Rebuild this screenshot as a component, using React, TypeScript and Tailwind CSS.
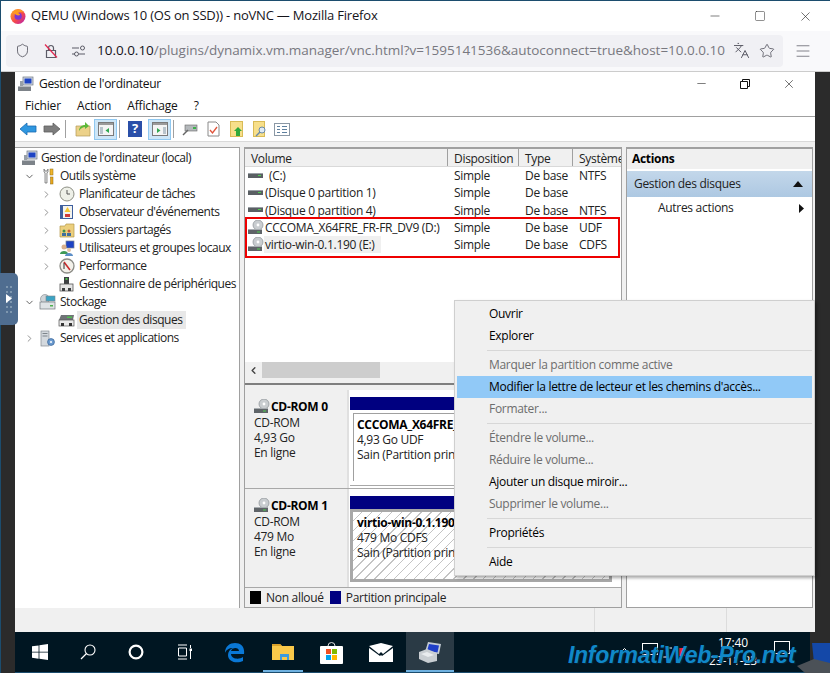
import React from 'react';
import { Shield, Languages, Star, Menu, X, Minus, Square, ChevronRight, ChevronDown, ChevronLeft } from 'lucide-react';

const HDD = () => (
  <svg width="16" height="10" viewBox="0 0 16 10" className="shrink-0">
    <rect x="0" y="2" width="15" height="5" fill="#5a5f63" />
    <rect x="0" y="2" width="15" height="1" fill="#9aa0a5" />
    <rect x="10" y="4" width="3" height="1" fill="#4fd04f" />
  </svg>
);

const CD = () => (
  <svg width="16" height="15" viewBox="0 0 16 15" className="shrink-0">
    <circle cx="10" cy="5" r="5" fill="#c9cdd0" stroke="#8a8f93" strokeWidth="0.7" />
    <circle cx="10" cy="5" r="1.4" fill="#fff" />
    <rect x="0" y="9" width="14" height="5" fill="#5f6468" />
    <rect x="0" y="9" width="14" height="1" fill="#a8adb1" />
    <rect x="9" y="11.5" width="3" height="1" fill="#4fd04f" />
  </svg>
);

const TreeIcon = ({ kind }: { kind: string }) => {
  if (kind === 'root')
    return (
      <svg width="17" height="16" viewBox="0 0 17 16">
        <rect x="6" y="1" width="10" height="8" fill="#d5dbe2" stroke="#6b7480" strokeWidth="0.7" />
        <rect x="7.5" y="2.5" width="7" height="5" fill="#1d43c4" />
        <rect x="1" y="10" width="13" height="5" fill="#7d8389" />
        <rect x="1" y="10" width="13" height="1" fill="#b8bcc0" />
        <rect x="3" y="5" width="3" height="5" fill="#98a0a8" />
      </svg>
    );
  if (kind === 'tools')
    return (
      <svg width="14" height="17" viewBox="0 0 14 17">
        <path d="M3 1v3l1 1v10h2V5l1-1V1L6 3H4z" fill="#e8e8e8" stroke="#666" strokeWidth="0.7" />
        <rect x="9" y="1" width="3" height="6" fill="#f1b52a" stroke="#8d6a12" strokeWidth="0.5" />
        <rect x="9.5" y="9" width="2.5" height="7" fill="#e9a71c" stroke="#8d6a12" strokeWidth="0.5" />
      </svg>
    );
  if (kind === 'clock')
    return (
      <svg width="16" height="16" viewBox="0 0 16 16">
        <circle cx="8" cy="8" r="7" fill="#eef0e8" stroke="#8d8f84" />
        <path d="M8 4v4h3" stroke="#555" fill="none" />
      </svg>
    );
  if (kind === 'event')
    return (
      <svg width="15" height="16" viewBox="0 0 15 16">
        <rect x="1" y="1" width="13" height="14" fill="#3e5f9e" />
        <rect x="4" y="2" width="9" height="12" fill="#f3f3ee" />
        <path d="M8.5 3l3 5h-6z" fill="#f4c531" />
        <rect x="6" y="10" width="5" height="3" fill="#cf3a3a" />
      </svg>
    );
  if (kind === 'share')
    return (
      <svg width="16" height="15" viewBox="0 0 16 15">
        <path d="M1 3h5l1-2h8v13H1z" fill="#eccf7d" stroke="#b59a4c" strokeWidth="0.7" />
        <circle cx="5" cy="8" r="1.5" fill="#3f8f4d" />
        <rect x="3" y="10" width="4" height="3" fill="#3f6f9f" />
        <circle cx="10" cy="8" r="1.5" fill="#c25d3b" />
        <rect x="8" y="10" width="4" height="3" fill="#3f6f9f" />
      </svg>
    );
  if (kind === 'users')
    return (
      <svg width="16" height="16" viewBox="0 0 16 16">
        <rect x="7" y="1" width="8" height="7" fill="#1d43c4" stroke="#7b8490" strokeWidth="0.7" />
        <circle cx="5" cy="7" r="2.5" fill="#d9b18c" />
        <path d="M1 14c0-4 8-4 8 0z" fill="#3f9a55" />
        <circle cx="10" cy="10" r="2" fill="#e2c3a4" />
        <path d="M6 16c0-4 8-4 8 0z" fill="#5c8fc7" />
      </svg>
    );
  if (kind === 'perf')
    return (
      <svg width="16" height="16" viewBox="0 0 16 16">
        <circle cx="8" cy="8" r="7" fill="#f3f1ea" stroke="#8b8b85" strokeWidth="1.3" />
        <path d="M5 4l6 8" stroke="#c92a2a" strokeWidth="1.6" />
        <path d="M5 11V5" stroke="#333" />
      </svg>
    );
  if (kind === 'device')
    return (
      <svg width="15" height="16" viewBox="0 0 15 16">
        <rect x="5" y="1" width="5" height="7" fill="#3c3f42" />
        <rect x="6.5" y="2" width="2" height="2" fill="#52c04f" />
        <rect x="1" y="8" width="13" height="7" fill="#e5e5e5" stroke="#555" strokeWidth="0.8" />
        <rect x="3" y="12" width="3" height="3" fill="#3c3f42" />
        <rect x="9" y="12" width="3" height="3" fill="#3c3f42" />
      </svg>
    );
  if (kind === 'storage')
    return (
      <svg width="17" height="16" viewBox="0 0 17 16">
        <circle cx="6" cy="5" r="4.5" fill="#cfd4d8" stroke="#7e858a" strokeWidth="0.6" />
        <rect x="7" y="2" width="9" height="5" fill="#3ba3c4" stroke="#7e858a" strokeWidth="0.6" />
        <rect x="1" y="8" width="15" height="7" fill="#dfe3e6" stroke="#6f767b" strokeWidth="0.7" />
        <rect x="11" y="11" width="3" height="1.5" fill="#4fb04f" />
      </svg>
    );
  if (kind === 'disk')
    return (
      <svg width="17" height="13" viewBox="0 0 17 13">
        <path d="M3 1h13l-1 5H1z" fill="#6f7376" />
        <rect x="1" y="6" width="15" height="6" fill="#e9e9e9" stroke="#555" strokeWidth="0.7" />
        <rect x="9" y="2.5" width="5" height="1.5" fill="#4fc04f" />
        <rect x="3" y="9" width="3" height="3" fill="#333" />
        <rect x="11" y="9" width="3" height="3" fill="#333" />
      </svg>
    );
  return (
    <svg width="15" height="17" viewBox="0 0 15 17">
      <rect x="1" y="1" width="8" height="15" fill="#d4d9de" stroke="#848b92" strokeWidth="0.7" />
      <rect x="2.5" y="3" width="5" height="1" fill="#7d848a" />
      <rect x="2.5" y="5.5" width="5" height="1" fill="#7d848a" />
      <circle cx="11" cy="12" r="3.4" fill="#6c9bd0" stroke="#3f6b9d" strokeWidth="0.8" />
      <circle cx="11" cy="12" r="1" fill="#fff" />
    </svg>
  );
};

const tree = [
  { label: "Gestion de l'ordinateur (local)", level: 0, icon: 'root', arrow: '' },
  { label: 'Outils système', level: 1, icon: 'tools', arrow: 'down' },
  { label: 'Planificateur de tâches', level: 2, icon: 'clock', arrow: 'right' },
  { label: "Observateur d'événements", level: 2, icon: 'event', arrow: 'right' },
  { label: 'Dossiers partagés', level: 2, icon: 'share', arrow: 'right' },
  { label: 'Utilisateurs et groupes locaux', level: 2, icon: 'users', arrow: 'right' },
  { label: 'Performance', level: 2, icon: 'perf', arrow: 'right' },
  { label: 'Gestionnaire de périphériques', level: 2, icon: 'device', arrow: '' },
  { label: 'Stockage', level: 1, icon: 'storage', arrow: 'down' },
  { label: 'Gestion des disques', level: 2, icon: 'disk', arrow: '', selected: true },
  { label: 'Services et applications', level: 1, icon: 'services', arrow: 'right' },
];

const volumes = [
  { name: '(C:)', sys: 'NTFS', cd: false, indent: true },
  { name: '(Disque 0 partition 1)', sys: '', cd: false },
  { name: '(Disque 0 partition 4)', sys: 'NTFS', cd: false },
  { name: 'CCCOMA_X64FRE_FR-FR_DV9 (D:)', sys: 'UDF', cd: true },
  { name: 'virtio-win-0.1.190 (E:)', sys: 'CDFS', cd: true, selected: true },
];

const menu: { label?: string; off?: boolean; active?: boolean; sep?: boolean }[] = [
  { label: 'Ouvrir' },
  { label: 'Explorer' },
  { sep: true },
  { label: 'Marquer la partition comme active', off: true },
  { label: "Modifier la lettre de lecteur et les chemins d'accès...", active: true },
  { label: 'Formater...', off: true },
  { sep: true },
  { label: 'Étendre le volume...', off: true },
  { label: 'Réduire le volume...', off: true },
  { label: 'Ajouter un disque miroir...' },
  { label: 'Supprimer le volume...', off: true },
  { sep: true },
  { label: 'Propriétés' },
  { sep: true },
  { label: 'Aide' },
];

const Toolbar = () => (
  <div className="flex items-center h-[24px] pl-[4px]">
    <svg width="18" height="14" viewBox="0 0 18 14"><path d="M1 7l7-6v3h9v6H8v3z" fill="#2f97e0" stroke="#1b6bb0" strokeWidth="0.8" /></svg>
    <svg width="18" height="14" viewBox="0 0 18 14" className="ml-[6px]"><path d="M17 7l-7-6v3H1v6h9v3z" fill="#7d7d7d" stroke="#5e5e5e" strokeWidth="0.8" /></svg>
    <div className="w-px h-[18px] bg-[#a0a0a0] ml-[4px]" />
    <svg width="16" height="16" viewBox="0 0 16 16" className="ml-[9px]"><path d="M1 5h14v10H1z" fill="#ecd189" stroke="#b29a58" strokeWidth="0.7" /><path d="M4 10c0-4 3-6 6-6V1l4 4-4 3V6c-2 0-4 1-6 4z" fill="#5db83a" /></svg>
    <div className="ml-[3px] w-[23px] h-[21px] bg-[#cde6f7] border border-[#90c8f0] flex items-center justify-center">
      <svg width="16" height="14" viewBox="0 0 16 14"><rect x="0.5" y="0.5" width="15" height="13" fill="#f4f4f4" stroke="#7a7a7a" /><rect x="1" y="1" width="14" height="2" fill="#9a9a9a" /><rect x="2" y="5" width="3" height="7" fill="#b8c4cc" /><path d="M11 6v5L7.5 8.5z" fill="#2fa84f" /></svg>
    </div>
    <div className="w-px h-[18px] bg-[#a0a0a0] ml-[2px]" />
    <div className="ml-[8px] w-[14px] h-[16px] bg-[#2a4fa8] text-white text-[13px] font-bold flex items-center justify-center">?</div>
    <div className="ml-[6px] w-[23px] h-[21px] bg-[#cde6f7] border border-[#90c8f0] flex items-center justify-center">
      <svg width="16" height="14" viewBox="0 0 16 14"><rect x="0.5" y="0.5" width="15" height="13" fill="#f4f4f4" stroke="#7a7a7a" /><rect x="1" y="1" width="14" height="2" fill="#9a9a9a" /><rect x="11" y="5" width="3" height="7" fill="#b8c4cc" /><path d="M5 6v5l3.5-2.5z" fill="#2fa84f" /></svg>
    </div>
    <div className="w-px h-[18px] bg-[#a0a0a0] ml-[2px]" />
    <svg width="16" height="13" viewBox="0 0 16 13" className="ml-[8px]"><rect x="3" y="2" width="12" height="6" fill="#b4b8bb" stroke="#666" strokeWidth="0.6" /><rect x="11" y="4" width="3" height="2" fill="#3db04a" /><path d="M1 12l5-5" stroke="#666" strokeWidth="1.4" /></svg>
    <svg width="13" height="16" viewBox="0 0 13 16" className="ml-[9px]"><path d="M1 1h8l3 3v11H1z" fill="#fff" stroke="#8a8a8a" /><path d="M3 9l2.5 3L10 6" stroke="#e0533a" strokeWidth="1.3" fill="none" /></svg>
    <svg width="13" height="16" viewBox="0 0 13 16" className="ml-[10px]"><rect x="0.5" y="0.5" width="12" height="15" fill="#f7df8a" stroke="#d9bb56" /><path d="M8 6l4 4h-2v5H6v-5H4z" fill="#2fa83a" /></svg>
    <svg width="14" height="16" viewBox="0 0 14 16" className="ml-[10px]"><rect x="0.5" y="0.5" width="11" height="15" fill="#f7df8a" stroke="#d9bb56" /><circle cx="9" cy="9" r="3" fill="#dfeaf4" stroke="#6a8aa8" /><path d="M7 11l-4 4" stroke="#6a8aa8" strokeWidth="1.4" /></svg>
    <svg width="16" height="13" viewBox="0 0 16 13" className="ml-[7px]"><rect x="0.5" y="0.5" width="15" height="12" fill="#fff" stroke="#8b98a5" /><path d="M3 3.5h3M3 6.5h3M3 9.5h3M8 3.5h5M8 6.5h5M8 9.5h5" stroke="#5d7f9e" /></svg>
  </div>
);

const DiskRow = ({ name, size, state, title, fs, hatched }: { name: string; size: string; state: string; title: string; fs: string; hatched?: boolean }) => (
  <div className="flex h-[99px] border-b border-[#a8a8a8]">
    <div className="w-[104px] shrink-0 bg-[#f0f0f0] border-r-2 border-[#e0e0e0] pl-[9px] pt-[8px] leading-[15px]">
      <div className="flex items-end gap-[1px] h-[16px] font-bold text-black"><CD />{name}</div>
      <div className="mt-[1px]">CD-ROM</div>
      <div>{size}</div>
      <div>{state}</div>
    </div>
    <div className="flex-1 min-w-0 pl-[1px] pt-[7px] pr-[9px] bg-white">
      <div className="h-[13px] bg-[#000080]" />
      {hatched ? (
        <div className="h-[73px] border-[3px] border-[#a8a8a8] pl-[4px] pt-[3px] leading-[15px] whitespace-nowrap overflow-hidden bg-[repeating-linear-gradient(135deg,#ffffff,#ffffff_6px,#c4c4c4_6px,#c4c4c4_7px)]">
          <div className="font-bold text-black">{title}</div>
          <div>{fs}</div>
          <div>Sain (Partition principale)</div>
        </div>
      ) : (
        <>
          <div className="h-[68px] mt-[3px] ml-[3px] border-l border-t border-[#a0a0a0] bg-white pl-[3px] pt-[3px] leading-[15px] whitespace-nowrap overflow-hidden">
            <div className="font-bold text-black">{title}</div>
            <div>{fs}</div>
            <div>Sain (Partition principale)</div>
          </div>
          <div className="mt-[4px] h-px bg-[#a8a8a8]" />
        </>
      )}
    </div>
  </div>
);

export default function App() {
  return (
    <div className="relative w-[830px] h-[673px] overflow-hidden bg-[#2b2b2b] text-[12px] text-[#222] font-['Open_Sans',sans-serif] tracking-[-0.3px]">
      <div className="border-t border-l border-[#1c4d6e] bg-white">
        {/* Firefox title bar */}
        <div className="flex items-center h-[30px] pl-[9px] pr-[17px] text-[13px] tracking-[-0.2px] text-[#15141a]">
          <svg width="16" height="16" viewBox="0 0 16 16" className="mr-[5px]">
            <defs>
              <linearGradient id="ff" x1="0" y1="0" x2="1" y2="1">
                <stop offset="0" stopColor="#ffb324" />
                <stop offset="0.55" stopColor="#f5484d" />
                <stop offset="1" stopColor="#b01fb8" />
              </linearGradient>
            </defs>
            <circle cx="8" cy="8.5" r="7.5" fill="url(#ff)" />
            <circle cx="8.2" cy="8.2" r="3.6" fill="#7a35d6" />
            <path d="M3 5c2-4 8-5 11 0-2-1-4-2-6 0 1 0 2 1 2 2-2 1-4 0-5-1z" fill="#ff9a1f" />
          </svg>
          <span>QEMU (Windows 10 (OS on SSD)) - noVNC — Mozilla Firefox</span>
          <div className="ml-auto flex items-center gap-[32px] text-[#222]">
            <Minus size={14} strokeWidth={1} />
            <Square size={12} strokeWidth={1} />
            <X size={15} strokeWidth={1} />
          </div>
        </div>
        {/* Firefox toolbar */}
        <div className="h-[41px] pb-[1px] bg-[#f9f9fb] border-b border-[#ccc] flex items-center pl-[5px] pr-[18px] text-[#5b5b66]">
          <div className="flex items-center h-[32px] w-[777px] bg-[#f0f0f4] rounded-[4px] pl-[9px] pr-[8px]">
            <Shield size={15} strokeWidth={1.4} className="shrink-0" />
            <svg width="16" height="16" viewBox="0 0 16 16" className="ml-[13px] shrink-0">
              <path d="M3.5 7.5h9v7h-9zM5.5 7.5V5a2.5 2.5 0 0 1 5 0v2.5" fill="none" stroke="#5b5b66" strokeWidth="1.2" />
              <path d="M2 1.5l12 13" stroke="#e22850" strokeWidth="1.2" />
            </svg>
            <svg width="15" height="12" viewBox="0 0 15 12" className="ml-[12px] shrink-0">
              <path d="M1 3h7M1 9h3M8 9h6" stroke="#5b5b66" strokeWidth="1.1" />
              <circle cx="11.5" cy="3" r="2" fill="none" stroke="#5b5b66" />
              <circle cx="5.5" cy="9" r="2" fill="none" stroke="#5b5b66" />
            </svg>
            <span className="ml-[11px] text-[13.5px] tracking-[-0.02px] whitespace-nowrap text-[#787880]">
              <span className="text-[#15141a]">10.0.0.10</span>/plugins/dynamix.vm.manager/vnc.html?v=1595141536&amp;autoconnect=true&amp;host=10.0.0.10
            </span>
            <Languages size={17} strokeWidth={1.4} className="ml-auto shrink-0" />
            <Star size={16} strokeWidth={1.3} className="ml-[9px] shrink-0" />
          </div>
          <Menu size={18} strokeWidth={1} className="ml-auto" />
        </div>
      </div>

      <div className="flex h-[601px] border-l border-[#1c4d6e]">
        <div className="w-[14px] shrink-0" />
        <div className="w-[800px] flex flex-col">
          {/* MMC window */}
          <div className="h-[560px] bg-[#f0f0f0] flex flex-col">
            <div className="bg-white">
              <div className="flex items-center h-[23px] pl-[2px] pr-[19px]">
                <TreeIcon kind="root" />
                <span className="ml-[5px] text-[#111]">Gestion de l'ordinateur</span>
                <div className="ml-auto flex items-center gap-[32px] text-[#111]">
                  <Minus size={13} strokeWidth={1} />
                  <svg width="10" height="10" viewBox="0 0 10 10"><path d="M2.5 2.5V.5h7v7h-2M.5 2.5h7v7h-7z" fill="none" stroke="#111" /></svg>
                  <X size={14} strokeWidth={1} />
                </div>
              </div>
              <div className="flex items-center h-[22px] pl-[10px] gap-[16px] tracking-[-0.15px] border-b border-[#a0a0a0] text-[#111]">
                <span>Fichier</span><span>Action</span><span>Affichage</span><span>?</span>
              </div>
              <div className="border-b border-[#d9d9d9]"><Toolbar /></div>
            </div>
            <div className="flex flex-1 min-h-0 pt-[5px] gap-[4px] text-[#222]">
              {/* Tree */}
              <div className="w-[225px] shrink-0 bg-white border-t border-r border-[#a0a0a0] pt-[1px] whitespace-nowrap tracking-[-0.47px]">
                {tree.map((t) => (
                  <div key={t.label} className="flex items-center h-[18px]" style={{ paddingLeft: t.level === 0 ? 5 : t.level === 1 ? 8 : 25 }}>
                    {t.level > 0 && (
                      <span className="w-[12px] shrink-0 text-[#8a8a8a] flex justify-center">
                        {t.arrow === 'down' && <ChevronDown size={11} strokeWidth={2} className="text-[#555]" />}
                        {t.arrow === 'right' && <ChevronRight size={11} strokeWidth={2} />}
                      </span>
                    )}
                    <span className={t.level === 0 ? 'w-[17px] h-[17px] shrink-0 flex items-center justify-center ml-[1px]' : t.level === 1 ? 'w-[17px] h-[17px] shrink-0 flex items-center justify-center ml-[4px] mr-[1px]' : 'w-[17px] h-[17px] shrink-0 flex items-center justify-center ml-[6px] mr-[1px]'}>
                      <TreeIcon kind={t.icon} />
                    </span>
                    <span className={t.selected ? 'ml-[1px] pl-[2px] pr-[4px] bg-[#e8e8e8] leading-[18px]' : 'ml-[1px] pl-[2px]'}>{t.label}</span>
                  </div>
                ))}
              </div>
              {/* Volumes + disks */}
              <div className="w-[378px] shrink-0 border-t-2 border-x border-b border-[#a0a0a0] flex flex-col bg-white">
                <div className="grid grid-cols-[203px_71px_54px_1fr] h-[18px] bg-[#f0f0f0] border-b border-[#d9d9d9] leading-[19px] overflow-hidden">
                  {['Volume', 'Disposition', 'Type', 'Système'].map((h, i) => (
                    <div key={h} className={i < 3 ? 'pl-[6px] border-r border-[#a0a0a0] whitespace-nowrap' : 'pl-[6px] whitespace-nowrap overflow-hidden'}>{h}</div>
                  ))}
                </div>
                <div className="h-[195px]">
                  {volumes.map((v) => (
                    <div key={v.name} className="grid grid-cols-[203px_71px_54px_1fr] h-[17.25px] leading-[17px] whitespace-nowrap">
                      <div className="flex items-center pl-[3px]">
                        <span className="w-[16px] flex justify-center">{v.cd ? <CD /> : <HDD />}</span>
                        <span className={v.selected ? 'bg-[#f0f0f0] pl-[1px] pr-[6px]' : v.indent ? 'pl-[5px]' : 'pl-[1px]'}>{v.name}</span>
                      </div>
                      <div className="pl-[6px]">Simple</div>
                      <div className="pl-[6px]">De base</div>
                      <div className="pl-[6px]">{v.sys}</div>
                    </div>
                  ))}
                </div>
                <div className="flex items-center h-[16px] bg-[#f0f0f0]">
                  <ChevronLeft size={11} strokeWidth={3} className="ml-[3px] text-[#444]" />
                  <div className="ml-[3px] w-[118px] h-full bg-[#cdcdcd]" />
                </div>
                <div className="h-[7px] bg-[#f0f0f0] border-b-2 border-[#7f7f7f]" />
                <div className="h-[5px] bg-[#f0f0f0]" />
                <DiskRow name="CD-ROM 0" size="4,93 Go" state="En ligne" title="CCCOMA_X64FRE_FR-FR_DV9 (D:)" fs="4,93 Go UDF" />
                <DiskRow name="CD-ROM 1" size="479 Mo" state="En ligne" title="virtio-win-0.1.190 (E:)" fs="479 Mo CDFS" hatched />
                <div className="flex-1 flex items-center bg-[#f0f0f0] pl-[5px]">
                  <span className="w-[11px] h-[13px] bg-black" />
                  <span className="ml-[5px]">Non alloué</span>
                  <span className="ml-[6px] w-[11px] h-[13px] bg-[#000080]" />
                  <span className="ml-[5px]">Partition principale</span>
                </div>
              </div>
              {/* Actions */}
              <div className="flex-1 min-w-0 mr-[2px] bg-white border-t-2 border-l border-r border-b border-[#a0a0a0]">
                <div className="h-[20px] bg-[#f0f0f0] pl-[5px] font-bold text-black leading-[20px]">Actions</div>
                <div className="h-[26px] mt-[2px] flex items-center pl-[7px] pr-[9px] bg-[linear-gradient(#c3d7ea,#adc8e2)]">
                  Gestion des disques
                  <svg width="10" height="6" viewBox="0 0 10 6" className="ml-auto"><path d="M0 6l5-6 5 6z" fill="#111" /></svg>
                </div>
                <div className="h-[22px] flex items-center pl-[31px] pr-[8px]">
                  Autres actions
                  <svg width="5" height="9" viewBox="0 0 5 9" className="ml-auto"><path d="M0 0l5 4.5L0 9z" fill="#111" /></svg>
                </div>
              </div>
            </div>
            <div className="h-[24px] shrink-0 flex">
              <div className="w-[580px] border-r border-[#dcdcdc]" />
              <div className="w-[132px] border-r border-[#dcdcdc]" />
            </div>
          </div>
          {/* Taskbar */}
          <div className="h-[41px] w-[795px] bg-[#001622] border-b border-[#1c4d6e] flex items-center">
            <div className="w-[49px] flex justify-center">
              <svg width="16" height="16" viewBox="0 0 16 16"><path d="M0 2.3l6.6-.9v6.3H0zM7.4 1.3L16 0v7.7H7.4zM0 8.4h6.6v6.3L0 13.8zM7.4 8.4H16V16l-8.6-1.2z" fill="#fff" /></svg>
            </div>
            <div className="w-[48px] flex justify-center">
              <svg width="16" height="16" viewBox="0 0 16 16"><circle cx="10" cy="6" r="5" fill="none" stroke="#fff" strokeWidth="1.1" /><path d="M6.5 9.5L1 15" stroke="#fff" strokeWidth="1.2" /></svg>
            </div>
            <div className="w-[48px] flex justify-center">
              <svg width="16" height="16" viewBox="0 0 16 16"><circle cx="8" cy="8" r="6.4" fill="none" stroke="#fff" strokeWidth="2.2" /></svg>
            </div>
            <div className="w-[48px] flex justify-center">
              <svg width="17" height="16" viewBox="0 0 17 16"><path d="M2 1h9M2 15h9M2.5 4h8v8h-8z" fill="none" stroke="#fff" /><path d="M14.5 1v3M14.5 7v8" stroke="#fff" /><rect x="13.5" y="4.5" width="2.5" height="2.5" fill="#fff" /></svg>
            </div>
            <div className="w-[52px] flex justify-center">
              <svg width="21" height="21" viewBox="0 0 21 21"><path d="M1 11C1 4 6 1 11 1c6 0 10 4 9 11H7c0 5 8 6 12 3v4c-6 3-15 1-15-6 0-3 2-6 5-7-4 0-7 2-8 5zM7 9h8c0-4-7-4-8 0z" fill="#0a78d6" /></svg>
            </div>
            <div className="w-[46px] h-full flex justify-center items-center relative">
              <svg width="22" height="18" viewBox="0 0 22 18"><path d="M0 1h8l2 2h12v14H0z" fill="#f9c84a" /><path d="M0 1h8l2 2H0z" fill="#d9a12a" /><path d="M8 11h9v6h-2v-3h-5v3H8z" fill="#3c9be0" /></svg>
              <div className="absolute bottom-0 left-[3px] right-[3px] h-[2px] bg-[#6fb1e0]" />
            </div>
            <div className="w-[50px] flex justify-center">
              <svg width="23" height="23" viewBox="0 0 23 23"><path d="M8 5a3.5 3.5 0 0 1 7 0" stroke="#ddd" fill="none" /><rect x="0" y="5" width="23" height="18" rx="1" fill="#fff" /><rect x="6" y="8" width="5" height="5" fill="#f25022" /><rect x="12" y="8" width="5" height="5" fill="#7fba00" /><rect x="6" y="14" width="5" height="5" fill="#00a4ef" /><rect x="12" y="14" width="5" height="5" fill="#ffb900" /></svg>
            </div>
            <div className="w-[50px] flex justify-center">
              <svg width="24" height="19" viewBox="0 0 24 19"><path d="M0 3l12-3 12 3-10 8-2-2-2 2zM0 5v14h24V5L13 13l-1-1-1 1z" fill="#fff" /></svg>
            </div>
            <div className="w-[48px] h-full bg-[#2a3a45] relative flex justify-center items-center">
              <svg width="23" height="22" viewBox="0 0 23 22"><path d="M9 1l13 2-2 10L6 11z" fill="#c4ccd4" /><path d="M10 3l10 1.5-1.5 7L8 10z" fill="#1f3fc8" /><path d="M0 11l8-3 10 4v8l-9 2-9-4z" fill="#c9ced2" /><path d="M2 13l6-2 7 3-6 2z" fill="#e9ecee" /></svg>
              <div className="absolute bottom-0 left-0 right-0 h-[2px] bg-[#6fb1e0]" />
            </div>
            {/* Tray */}
            <div className="ml-auto h-full flex items-center text-white">
              <svg width="9" height="5" viewBox="0 0 9 5" className="mb-[4px]"><path d="M.5 4.5l4-4 4 4" fill="none" stroke="#fff" /></svg>
              <div className="ml-[13px] w-[16px] h-[12px] mb-[7px] border border-white" />
              <svg width="16" height="14" viewBox="0 0 16 14" className="ml-[4px]"><path d="M1 12h5V3h4" fill="none" stroke="#fff" /></svg>
              <div className="ml-[1px] w-[6px] h-[8px] bg-[#e8202c]" />
              <div className="ml-[18px] w-[60px] text-[12px] leading-[18px] text-center tracking-[-0.1px]">
                <div>17:40</div>
                <div>23-11-23</div>
              </div>
              <div className="ml-[11px] mr-[20px] w-[16px] h-[13px] mb-[9px] border border-white" />
            </div>
          </div>
        </div>
      </div>

      {/* Red selection frame */}
      <div className="absolute left-[245px] top-[217px] w-[375px] h-[41px] border-2 border-[#ee0000]" />

      {/* noVNC handle */}
      <div className="absolute left-0 top-[273px] w-[18px] h-[52px] rounded-r-[5px] bg-[#4f6d90] grid grid-cols-2 content-center justify-items-center gap-y-[3px] px-[5px]">
        {[0, 1, 2, 3, 4, 5, 6, 7, 8, 9, 10, 11].map((d) => <span key={d} className="w-[2px] h-[2px] bg-[#7e97af]" />)}
        <svg width="6" height="9" viewBox="0 0 6 9" className="absolute left-[6px] top-[21px]"><path d="M0 0l6 4.5L0 9z" fill="#fff" /></svg>
      </div>

      {/* Context menu */}
      <div className="absolute left-[454px] top-[300px] w-[361px] h-[276px] bg-[#f0f0f0] border border-[#cfcfcf] shadow-[2px_2px_3px_rgba(0,0,0,0.35)] py-[2px] px-[2px] text-black">
        {menu.map((m, i) =>
          m.sep ? (
            <div key={i} className="h-[7px] flex items-center pl-[30px]"><div className="h-px w-full bg-[#d7d7d7]" /></div>
          ) : (
            <div key={i} className={`h-[22px] leading-[22px] pl-[32px] ${m.active ? 'bg-[#91c9f7]' : ''} ${m.off ? 'text-[#6d6d6d]' : ''}`}>{m.label}</div>
          )
        )}
      </div>

      {/* Watermark */}
      <div className="absolute left-[568px] top-[641px] text-[23px] leading-[28px] font-bold italic font-['Liberation_Sans',sans-serif] tracking-[-0.3px] text-[#1088c8] [text-shadow:1px_1px_1px_#06233a]">InformatiWeb-Pro.net</div>

      {/* Wallpaper laptop */}
      <svg width="33" height="31" viewBox="0 0 33 31" className="absolute left-[797px] top-[642px]">
        <path d="M15 1h18v20H17z" fill="#1448a8" />
        <path d="M0 24l17-7 16 4v10H8z" fill="#4b5157" />
      </svg>
    </div>
  );
}
